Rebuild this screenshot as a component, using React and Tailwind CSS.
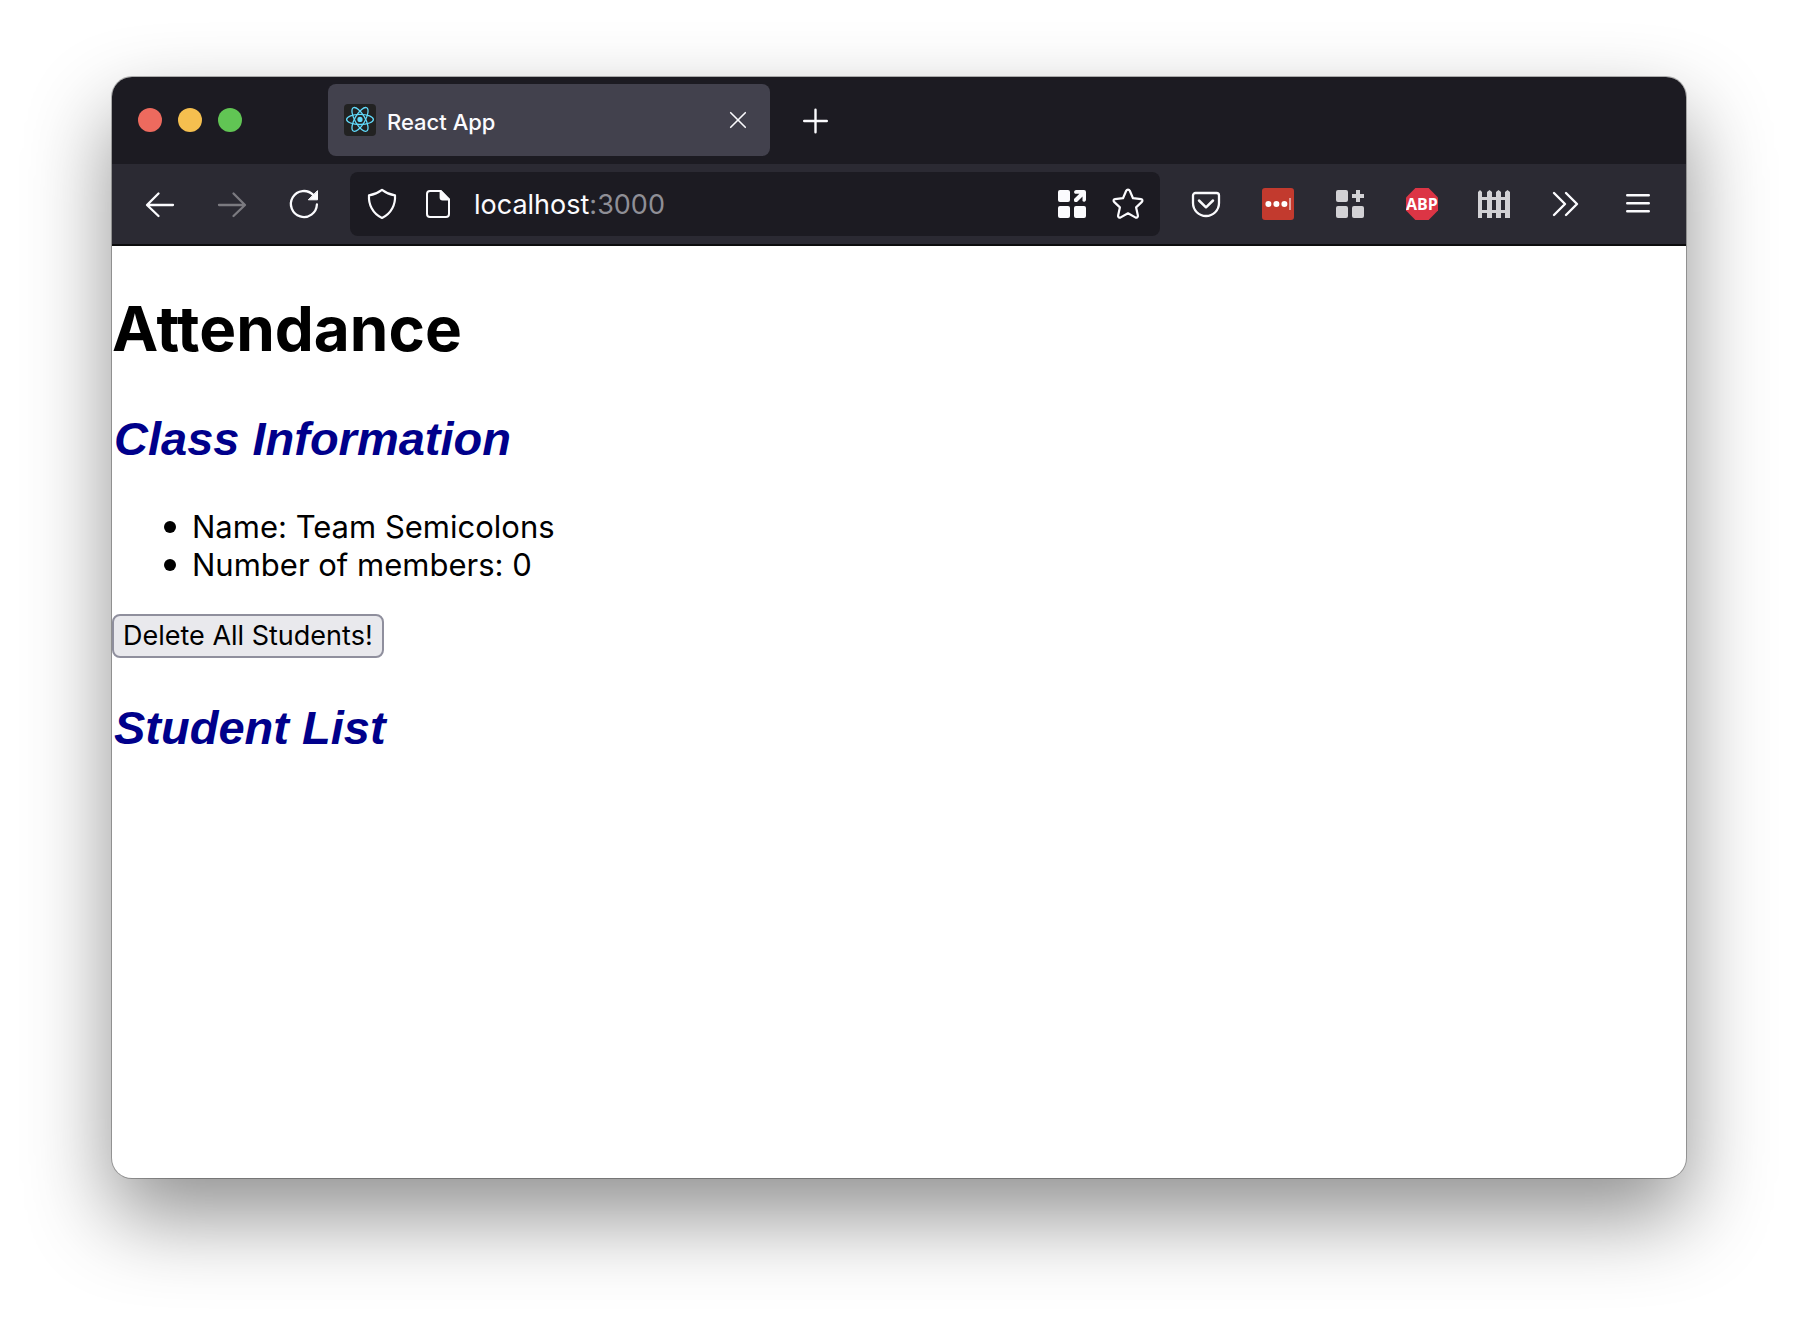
const svgBase = {
  fill: "none",
  stroke: "currentColor",
  strokeWidth: 2,
  strokeLinecap: "round",
  strokeLinejoin: "round",
  "aria-hidden": true,
};

function Icon({ children, ...rest }) {
  return (
    <svg viewBox="0 0 32 32" className="size-8 shrink-0" {...svgBase} {...rest}>
      {children}
    </svg>
  );
}

function ToolButton({ label, children, disabled }) {
  return (
    <button
      type="button"
      aria-label={label}
      disabled={disabled}
      className="flex h-16 w-16 shrink-0 items-center justify-center text-[#fbfbfe] disabled:text-[#7b7a80]"
    >
      {children}
    </button>
  );
}

function ReactLogo() {
  return (
    <svg viewBox="0 0 32 32" className="size-8 shrink-0" aria-hidden="true">
      <rect width="32" height="32" rx="4" fill="#222" />
      <g fill="none" stroke="#61dafb" strokeWidth="1.3">
        <ellipse cx="16" cy="15.4" rx="13.4" ry="5.1" />
        <ellipse cx="16" cy="15.4" rx="13.4" ry="5.1" transform="rotate(60 16 15.4)" />
        <ellipse cx="16" cy="15.4" rx="13.4" ry="5.1" transform="rotate(120 16 15.4)" />
      </g>
      <circle cx="16" cy="15.4" r="2.6" fill="#61dafb" />
    </svg>
  );
}

function TabBar() {
  return (
    <header className="flex h-[87px] items-center bg-[#1c1b22] pb-px">
      <div className="ml-[26px] flex shrink-0 gap-4">
        <button type="button" aria-label="Close window" className="size-6 rounded-full bg-[#ed6a5e]" />
        <button type="button" aria-label="Minimize window" className="size-6 rounded-full bg-[#f5bf4f]" />
        <button type="button" aria-label="Zoom window" className="size-6 rounded-full bg-[#61c554]" />
      </div>
      <div className="ml-[86px] flex h-18 w-[442px] items-center rounded-lg bg-[#42414d] px-4">
        <ReactLogo />
        <span className="ml-[11px] flex-1 pt-1 text-[22px] font-medium leading-8 text-[#fbfbfe]">React App</span>
        <button type="button" aria-label="Close tab" className="flex size-8 items-center justify-center text-[#fbfbfe]">
          <Icon strokeWidth="1.6">
            <path d="M8.7 8.7 23.3 23.3M23.3 8.7 8.7 23.3" />
          </Icon>
        </button>
      </div>
      <button type="button" aria-label="New tab" className="ml-[13px] flex size-16 items-center justify-center text-[#fbfbfe]">
        <Icon strokeWidth="2.4">
          <path d="M16.500 5.7v22.6M5.200 17h22.6" />
        </Icon>
      </button>
    </header>
  );
}

function AddressBar() {
  return (
    <div className="mx-[6px] flex h-16 min-w-0 flex-1 items-center rounded-lg bg-[#1c1b22] px-4 text-[#fbfbfe]">
      <Icon>
        <path strokeWidth="2.2" d="M16 1.800c3.800 2.900 8 4.700 13 5.600.6 8.800-3.400 18-13 22.600C6.400 25.400 2.400 16.200 3 7.400c5-.9 9.200-2.700 13-5.600z" />
      </Icon>
      <Icon className="ml-6 size-8 shrink-0">
        <path d="M18.600 3H8a3 3 0 0 0-3 3v20a3 3 0 0 0 3 3h16a3 3 0 0 0 3-3V11.400z" />
        <path d="M18.600 3v6.400a2 2 0 0 0 2 2H27z" fill="currentColor" />
      </Icon>
      <div className="ml-5 min-w-0 flex-1 whitespace-nowrap pt-0.5 text-[27px] leading-9">
        localhost<span className="text-[#8f8f96]">:3000</span>
      </div>
      <button type="button" aria-label="Open in container" className="flex size-8 items-center justify-center">
        <Icon stroke="none" fill="currentColor">
          <rect x="2" y="2" width="12" height="12" rx="2" />
          <rect x="2" y="18" width="12" height="12" rx="2" />
          <rect x="18" y="18" width="12" height="12" rx="2" />
          <path d="M20 2h8a2 2 0 0 1 2 2v8a2 2 0 0 1-3.500 1V8.600L21 14h-1.500A1.500 1.500 0 0 1 18 12.500V11l5.400-5.300H19A2 2 0 0 1 20 2z" />
        </Icon>
      </button>
      <button type="button" aria-label="Bookmark this page" className="ml-6 flex size-8 items-center justify-center">
        <Icon>
          <path strokeWidth="2.2" d="M14.200 2.800a2 2 0 0 1 3.600 0l3.200 7.400 8 .9a1.600 1.600 0 0 1 .9 2.800l-5.800 5.500 1.800 8.200a1.700 1.700 0 0 1-2.600 1.800L16 25.300l-7.300 4.100a1.700 1.700 0 0 1-2.600-1.800l1.800-8.200-5.800-5.500a1.600 1.600 0 0 1 .9-2.800l8-.9z" />
        </Icon>
      </button>
    </div>
  );
}

function Toolbar() {
  return (
    <nav aria-label="Navigation" className="flex h-[82px] items-center gap-2 border-b-2 border-[#0c0c0d] bg-[#2b2a33] px-4">
      <ToolButton label="Go back">
        <Icon strokeWidth="2.3">
          <path d="M29 17H3.500M14.500 5.500 3 17l11.500 11" />
        </Icon>
      </ToolButton>
      <ToolButton label="Go forward" disabled>
        <Icon strokeWidth="2.3">
          <path d="M3 17h25.500M17.500 5.500 29 17 17.500 28" />
        </Icon>
      </ToolButton>
      <ToolButton label="Reload">
        <Icon strokeWidth="2.300">
          <path d="M28.900 16.500A13 13 0 1 1 25.200 6.900" />
          <path d="M29.500 3v8.800h-8.800z" fill="currentColor" stroke="currentColor" strokeWidth="1" />
        </Icon>
      </ToolButton>
      <AddressBar />
      <ToolButton label="Save to Pocket">
        <Icon strokeWidth="2.3">
          <path d="M5.500 5h21A2.500 2.500 0 0 1 29 7.500V15a13 13 0 0 1-26 0V7.500A2.500 2.500 0 0 1 5.500 5z" />
          <path strokeWidth="2.500" d="m9 12.500 7 6.800 7-6.800" />
        </Icon>
      </ToolButton>
      <ToolButton label="Password manager">
        <Icon stroke="none">
          <rect width="32" height="32" rx="3" fill="#c23a2e" />
          <circle cx="6.400" cy="16" r="3" fill="#fff" />
          <circle cx="14.400" cy="16" r="3" fill="#fff" />
          <circle cx="22.400" cy="16" r="3" fill="#fff" />
          <rect x="27" y="10" width="2" height="12" fill="#e0a19c" />
        </Icon>
      </ToolButton>
      <ToolButton label="Containers">
        <Icon stroke="none" fill="#d2d1d5">
          <rect x="2" y="2" width="12" height="12" rx="2" />
          <rect x="2" y="18" width="12" height="12" rx="2" />
          <rect x="18" y="18" width="12" height="12" rx="2" />
          <path d="M22 2h4v4h4v4h-4v4h-4v-4h-4V6h4z" />
        </Icon>
      </ToolButton>
      <ToolButton label="Adblock Plus">
        <Icon stroke="none">
          <path d="M9.400 0h13.200L32 9.400v13.200L22.600 32H9.400L0 22.600V9.400z" fill="#dc3545" />
          <text x="16" y="22" textAnchor="middle" fontFamily="Open Sans" fontWeight="700" fontSize="16" fill="#fff">
            ABP
          </text>
        </Icon>
      </ToolButton>
      <ToolButton label="Fence">
        <Icon stroke="none" fill="#d2d1d5">
          <path d="M0 30V4l2-2 2 2v26zM9 30V4l2.500-2L14 4v26zM18 30V4l2.500-2L23 4v26zM27 30V4l2.500-2L32 4v26z" />
          <path d="M2 9h28v3H2zM2 22h28v3H2z" />
        </Icon>
      </ToolButton>
      <ToolButton label="More tools">
        <Icon strokeWidth="2.400">
          <path d="M4 5 15 16 4 27M16 5 27 16 16 27" />
        </Icon>
      </ToolButton>
      <ToolButton label="Open application menu">
        <Icon strokeWidth="2.400">
          <path d="M5.200 7.200h21.600M5.200 15.200h21.600M5.200 23.200h21.600" />
        </Icon>
      </ToolButton>
    </nav>
  );
}

function SectionHeading({ children }) {
  return (
    <h2 className="pl-0.5 font-['Liberation_Sans',sans-serif] text-[47px] font-bold italic leading-[58px] text-[#00008b]">
      {children}
    </h2>
  );
}

function Bullet({ children }) {
  return (
    <li className="flex items-center gap-4 before:size-3 before:shrink-0 before:rounded-full before:bg-black">
      {children}
    </li>
  );
}

export default function App() {
  return (
    <div className="flex min-h-screen flex-col bg-white px-28 pb-[148px] pt-[77px] font-['Inter',sans-serif]">
      <div className="flex flex-1 flex-col overflow-hidden rounded-[20px] bg-white shadow-[0_0_0_1px_rgba(0,0,0,0.28),0_38px_84px_rgba(0,0,0,0.44)]">
        <TabBar />
        <Toolbar />
        <main className="flex-1 pb-10 pt-[45px] text-[31px] leading-[38px] text-black">
          <h1 className="text-[62px] font-bold leading-[76px]">Attendance</h1>
          <div className="mt-[43px]">
            <SectionHeading>Class Information</SectionHeading>
          </div>
          <ul className="mt-10 pl-[52px]">
            <Bullet>Name: Team Semicolons</Bullet>
            <Bullet>Number of members: 0</Bullet>
          </ul>
          <button
            type="button"
            className="mt-[30px] block rounded-lg border-2 border-[#8f8f9d] bg-[#e9e9ed] px-[9px] text-[27px] leading-10"
          >
            Delete All Students!
          </button>
          <div className="mt-[41px]">
            <SectionHeading>Student List</SectionHeading>
          </div>
        </main>
      </div>
    </div>
  );
}
